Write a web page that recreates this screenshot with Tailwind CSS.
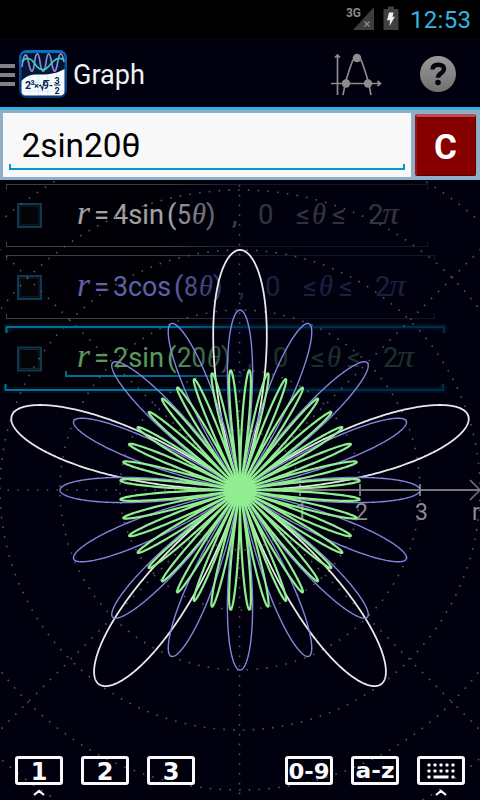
<!DOCTYPE html>
<html lang="en">
<head>
<meta charset="utf-8">
<title>Graph</title>
<script src="https://cdn.jsdelivr.net/npm/@tailwindcss/browser@4"></script>
</head>
<body class="bg-[#00000f] w-[480px] h-[800px] overflow-hidden font-['Roboto',sans-serif]">
<div class="flex flex-col w-[480px] h-[800px] overflow-hidden">
  <div class="h-[38px] shrink-0 bg-black flex justify-end">
    <svg width="140" height="38" viewBox="340 0 140 38">
      <path d="M353 30L374 7V30Z" fill="#3d3d3d"/>
      <text x="346" y="17" font-size="12.5" font-weight="700" fill="#8a8a8a" textLength="15" lengthAdjust="spacingAndGlyphs">3G</text>
      <path d="M364.500 21.500l5 5m0-5l-5 5" stroke="#8c8c8c" stroke-width="1.300"/>
      <path d="M383.500 9h4.500v-2.500h6V9h4.500v21h-15z" fill="#404040"/>
      <path d="M389 12.500h4.500l-1 4.500 2.500-.5-5.500 9.500.5-6-3 .5z" fill="#f0f0f0"/>
      <text x="410" y="28" font-size="24" fill="#33b5e5" textLength="61">12:53</text>
    </svg>
  </div>
  <header class="h-[69px] shrink-0 border-t border-[#07070f] bg-[#00000f] flex">
    <svg width="480" height="68" viewBox="0 39 480 68">
      <defs>
        <linearGradient id="ib" x2="0" y2="1"><stop stop-color="#0a72c4"/><stop offset=".4" stop-color="#084c94"/><stop offset="1" stop-color="#06376e"/></linearGradient>
        <linearGradient id="id" x2="0" y2="1"><stop stop-color="#03142c"/><stop offset="1" stop-color="#041c40"/></linearGradient>
        <linearGradient id="hg" x2="0" y2="1"><stop stop-color="#999"/><stop offset="1" stop-color="#707070"/></linearGradient>
      </defs>
      <path d="M0 64h15v4H0zM0 73h15v4H0zM0 82h15v4H0z" fill="#828282"/>
      <rect x="19" y="50" width="48" height="48" rx="8" fill="url(#ib)"/>
      <rect x="21.500" y="53" width="43" height="42.500" rx="4" fill="url(#id)"/>
      <path d="M21.500 81C29 73 36 75 45 74.500C54 74 59 72 64.500 69V91a4 4 0 0 1-4 4.500h-35a4 4 0 0 1-4-4.500z" fill="#f8fcff"/>
      <path d="M29.500 76v19M38.500 75v20M47.500 75v20M56.500 73v22M22 82.500h42M22 91h42" stroke="#cfeaf5" stroke-width=".8"/>
      <path d="M22 67C23.500 53 26.500 51 28.500 62S33 75 34.500 63S38.500 51 40 62S44.500 75 46 63S49.500 51 51.500 62S55.500 75 57.500 63S62 51 64 62" fill="none" stroke="#9088dc" stroke-width="1.700"/>
      <path d="M22 62C26 56 31 58 35 64S44 72 49 66S58 56 64 60" fill="none" stroke="#2fd3b6" stroke-width="1.700"/>
      <g fill="#0b2450" font-weight="700"><text x="25" y="89" font-size="10.500">2</text><text x="30.500" y="84.500" font-size="7">3</text><text x="34" y="89" font-size="9">×</text><text x="43" y="89" font-size="10">9</text><text x="49" y="89" font-size="10">-</text><text x="54.500" y="83.500" font-size="9">3</text><text x="54.500" y="93.500" font-size="9">2</text></g>
      <path d="M39 86l1.500-1 2 4.500 1.500-9h5.500M54 85h6.500" fill="none" stroke="#0b2450" stroke-width="1.100"/>
      <text x="73" y="84" font-size="27" fill="#f2f2f2" textLength="72" lengthAdjust="spacingAndGlyphs">Graph</text>
      <g fill="none" stroke="#8c8c8c" stroke-width="1.700">
        <path d="M337.500 95V55M335 57.500l2.500-2.500 2.500 2.500M331 83.500h49M377.500 81l3 2.500-3 2.500M343 95C345 83 349 70 352.500 61Q357 53 361.500 61C365 70 369 83 371 95"/>
      </g>
      <g fill="#8c8c8c"><circle cx="346" cy="83.500" r="4.200"/><circle cx="368" cy="83.500" r="4.200"/><circle cx="357" cy="58" r="4.300"/></g>
      <circle cx="438" cy="74" r="18" fill="url(#hg)"/>
      <path d="M432.500 69.500c0-3.200 2.300-4.800 5.700-4.800 3.600 0 5.800 1.600 5.800 4.300 0 4.300-6 4-6 8.800" fill="none" stroke="#05050f" stroke-width="4.400"/>
      <circle cx="438" cy="82.500" r="2.800" fill="#05050f"/>
    </svg>
  </header>
  <div class="h-[73px] shrink-0 border-t-3 border-[#33b0df] bg-[#8fafc8] flex pt-[3px] pl-[3px]">
    <div class="w-[408px] h-[64px] bg-[#f8f8f8]">
      <svg width="408" height="64" viewBox="3 113 408 64">
        <text x="21.500" y="157" font-size="34" fill="#000" textLength="119" lengthAdjust="spacingAndGlyphs">2sin20θ</text>
        <path d="M10 164v5h394v-5" fill="none" stroke="#0099cc" stroke-width="2"/>
      </svg>
    </div>
    <div class="w-[61px] h-[62px] mt-px ml-1 rounded-[2px] bg-[#860000] border-t-[3px] border-t-[#b85050] border-l-2 border-l-[#9c1515] border-r border-r-[#5c0000] border-b border-b-[#5c0000] flex items-center justify-center">
      <span class="text-white font-bold text-[35px] leading-none pt-[3px] -ml-px">C</span>
    </div>
  </div>
  <main class="relative h-[620px] shrink-0 bg-[#00000f]">
    <div id="rows" class="flex flex-col w-[480px] bg-linear-to-r from-[#000006] from-30% to-[#00000f] to-50%"></div>
    <svg class="absolute inset-0" width="480" height="620" viewBox="0 180 480 620">
      <g id="grid" fill="none" stroke="#565656" stroke-width="1.600"></g>
      <g fill="none" stroke="#777" stroke-width="2"><path d="M240 490H480M300 484v12M360 484v12M420 484v12"/><path d="M470 480l10 10-10 10" stroke-width="1.500"/></g>
      <g fill="#8c8c8c" font-size="23"><text x="295" y="520">1</text><text x="355" y="520">2</text><text x="415" y="520">3</text><text x="472" y="520">r</text></g>
      <g id="curves" fill="none" stroke-linejoin="round"></g>
    </svg>
    <svg class="absolute left-0 bottom-0" width="480" height="50" viewBox="0 750 480 50">
      <g fill="none" stroke="#fafafa" stroke-width="3">
        <rect x="16.500" y="757.500" width="45" height="26" rx="1.500"/><rect x="82.500" y="757.500" width="45" height="26" rx="1.500"/><rect x="148.500" y="757.500" width="45" height="26" rx="1.500"/>
        <rect x="286.500" y="757.500" width="45" height="26" rx="1.500"/><rect x="352.500" y="757.500" width="45" height="26" rx="1.500"/><rect x="418.500" y="757.500" width="45" height="26" rx="1.500"/>
        <path d="M34 795l5-4 5 4M436 795l5-4 5 4" stroke-width="2.200"/>
      </g>
      <g font-family="DejaVu Sans" font-weight="700" font-size="24" fill="#fafafa" text-anchor="middle">
        <text x="39" y="780">1</text><text x="105" y="780">2</text><text x="171" y="780">3</text>
        <text x="309" y="778.500" font-size="21.500" textLength="41" lengthAdjust="spacingAndGlyphs">0-9</text>
        <text x="375" y="778" font-size="21.500" textLength="39" lengthAdjust="spacingAndGlyphs">a-z</text>
      </g>
      <g id="keys" fill="#fafafa"></g>
    </svg>
  </main>
</div>
<script>
const rows = [
  {c:'#ffffff', y:43.5, f:[[77,'r',1],[94,'='],[113,'4sin',0,51],[167,'('],[177,'5',0,14],[192,'θ',1],[206,')'],[232,','],[258,'0'],[296,'≤'],[312,'θ',1],[332,'≤'],[368,'2'],[382,'π',1]], b:[4.5,66.5,6.5,427.5]},
  {c:'#9797ff', y:115.5, f:[[77,'r',1],[94,'='],[113,'3cos',0,58],[174,'('],[184,'8',0,14],[199,'θ',1],[213,')'],[239,','],[265,'0'],[303,'≤'],[319,'θ',1],[339,'≤'],[375,'2'],[389,'π',1]], b:[75.5,138.5,6.5,434.5]},
  {c:'#90ee90', y:187, f:[[77,'r',1],[94,'='],[113,'2sin',0,51],[167,'('],[177,'20',0,29],[207,'θ',1],[221,')'],[247,','],[273,'0'],[311,'≤'],[327,'θ',1],[347,'≤'],[383,'2'],[397,'π',1]], b:[147,210,6.5,444]}
];
const mathSize = {r:[33,13], 'θ':[30,14], 'π':[32,17]};
document.getElementById('rows').innerHTML = rows.map((r,i)=>{
  const top=i*72, [a,b,l,e]=r.b, hot=i===2, cb=hot?23.5:24;
  const grad=(id,c,o1,o2)=>`<linearGradient id="${id}" gradientUnits="userSpaceOnUse" x1="170" x2="245" y1="0" y2="0"><stop stop-color="${c}" stop-opacity="${o1}"/><stop offset="1" stop-color="${c}" stop-opacity="${o2}"/></linearGradient>`;
  const d=`M${l} ${a+(hot?6:5)}V${a}H${e}v${hot?6:5}M${hot?l-1:l} ${b-(hot?6:5)}V${b}H${hot?e-1:e}v${hot?-6:-5}`;
  const math=s=>`font-family="Liberation Serif, serif" font-style="italic" font-size="${mathSize[s][0]}" textLength="${mathSize[s][1]}" lengthAdjust="spacingAndGlyphs"`;
  return `<svg width="480" height="72" viewBox="0 ${top} 480 72" style="overflow:visible"><defs>${grad('t'+i,r.c,.64,.2)}${grad('l'+i,hot?'#00a0d8':'#ffffff',hot?.68:.24,hot?.22:.09)}</defs>
  ${hot?`<path d="${d}" fill="none" stroke="#0088cc" stroke-opacity=".1" stroke-width="6"/><path d="M66 191v5H241v-5" fill="none" stroke="url(#l2)" stroke-width="2"/>`:''}
  <path d="${d}" fill="none" stroke="url(#l${i})" stroke-width="${hot?2:1}"/>
  <rect x="18" y="${cb+top}" width="23" height="23" fill="none" stroke="#0b3a55" stroke-width="2"/><rect x="20" y="${cb+2+top}" width="19" height="19" fill="#030308" stroke="#20232b"/>
  <g fill="url(#t${i})" font-size="27.5">${r.f.map(([x,s,it,w])=>`<text x="${x}" y="${r.y}" ${it?math(s):''} ${w?`textLength="${w}" lengthAdjust="spacingAndGlyphs"`:''}>${s}</text>`).join('')}</g></svg>`;
}).join('');
let g='';
for(let R=60;R<=360;R+=60) g+=`<circle cx="240" cy="490" r="${R}" stroke-dasharray="1.6 8.2"/>`;
g+='<path d="M7.500 490H240M239.500 185V800" stroke-dasharray="1.6 8.2"/><path d="M-70 180L550 800M550 180L-70 800" stroke-dasharray="1.6 8.2"/>';
document.getElementById('grid').innerHTML=g;
const polar=(f,c,w)=>{let d='';for(let k=0;k<=3600;k++){const t=k/3600*2*Math.PI,r=60*f(t);d+=(k?'L':'M')+(240+r*Math.cos(t)).toFixed(2)+' '+(490-r*Math.sin(t)).toFixed(2);}return `<path d="${d}" stroke="${c}" stroke-width="${w}"/>`;};
document.getElementById('curves').innerHTML=polar(t=>4*Math.sin(5*t),'#e9e9e9',1.8)+polar(t=>3*Math.cos(8*t),'#8484dd',1.4)+polar(t=>2*Math.sin(20*t),'#90ee90',2.2);
let k='';
for(let j=0;j<3;j++)for(let i=0;i<5;i++)if(j<2||i===0||i===4)k+=`<rect x="${427.5+i*6}" y="${763.5+j*6}" width="3" height="3" rx=".8"/>`;
document.getElementById('keys').innerHTML=k+'<rect x="433.500" y="775.500" width="15" height="3"/>';
</script>
</body>
</html>
